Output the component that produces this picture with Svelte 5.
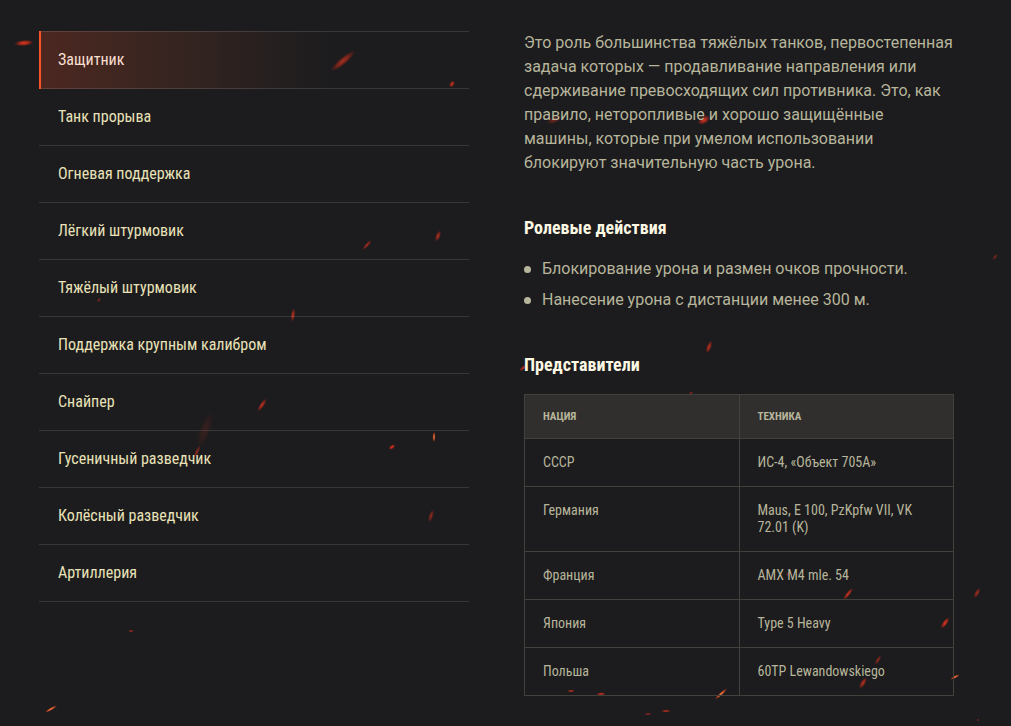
<script>
  let active = $state(0);

  const roles = [
    'Защитник',
    'Танк прорыва',
    'Огневая поддержка',
    'Лёгкий штурмовик',
    'Тяжёлый штурмовик',
    'Поддержка крупным калибром',
    'Снайпер',
    'Гусеничный разведчик',
    'Колёсный разведчик',
    'Артиллерия'
  ];

  const actions = [
    'Блокирование урона и размен очков прочности.',
    'Нанесение урона с дистанции менее 300 м.'
  ];

  const vehicles = [
    { nation: 'СССР', tanks: 'ИС-4, «Объект 705А»' },
    { nation: 'Германия', tanks: 'Maus, E 100, PzKpfw VII, VK 72.01 (K)' },
    { nation: 'Франция', tanks: 'AMX M4 mle. 54' },
    { nation: 'Япония', tanks: 'Type 5 Heavy' },
    { nation: 'Польша', tanks: '60TP Lewandowskiego' }
  ];

  // x, y, half length, half width, angle, opacity, hot core
  const sparks = [
    [24, 43, 10, 3.2, -5, 1, 0],
    [343, 61, 16, 4, -40, 0.7, 0],
    [452, 84, 4, 2.6, -60, 0.9, 0],
    [554, 120, 8, 3.5, -20, 0.45, 0],
    [704, 120, 7, 4, -30, 0.95, 0],
    [367, 245, 7, 2, -48, 0.7, 0],
    [438, 236, 6, 2.6, -70, 0.75, 0],
    [293, 315, 7, 2.4, -82, 0.8, 0],
    [99, 300, 3, 1.8, -50, 0.5, 0],
    [709, 347, 7, 2.6, -70, 0.8, 0],
    [523, 368, 5, 2, -40, 0.8, 0],
    [691, 393, 3, 1.5, -20, 0.5, 0],
    [995, 257, 4, 2, -55, 0.45, 0],
    [262, 405, 8, 2.4, -56, 0.85, 0],
    [205, 430, 20, 6, -70, 0.15, 0],
    [197, 452, 8, 2, -65, 0.6, 0],
    [392, 447, 4, 2.2, -35, 1, 0],
    [434, 437, 5, 1.5, -88, 0.8, 1],
    [431, 516, 7, 2.4, -72, 0.6, 0],
    [788, 574, 3, 2, -60, 0.5, 0],
    [848, 594, 8, 2.2, -52, 0.9, 0],
    [977, 593, 6, 2.4, -60, 0.7, 0],
    [945, 623, 7, 2.6, -55, 1, 0],
    [878, 660, 6, 2, -58, 0.6, 0],
    [863, 683, 7, 2.6, -58, 0.8, 0],
    [955, 677, 5, 1.4, -28, 0.85, 1],
    [721, 694, 8, 1.6, -42, 0.85, 1],
    [571, 691, 4, 1.6, -5, 0.8, 0],
    [601, 694, 5, 1.8, -5, 0.9, 0],
    [648, 714, 4, 1.5, -10, 0.6, 0],
    [666, 711, 5, 1.7, 0, 0.8, 0],
    [978, 720, 2, 1, 0, 0.6, 0],
    [131, 631, 3, 1.5, 0, 0.7, 0],
    [51, 709, 7, 1.4, -30, 0.85, 1]
  ];
</script>

<div class="page">
  <svg class="sparks" aria-hidden="true">
    <defs>
      <radialGradient id="ember">
        <stop offset="0" stop-color="#e43822" />
        <stop offset="0.5" stop-color="#b32a1b" stop-opacity="0.8" />
        <stop offset="1" stop-color="#801b14" stop-opacity="0" />
      </radialGradient>
      <radialGradient id="hot">
        <stop offset="0" stop-color="#f09450" />
        <stop offset="0.5" stop-color="#e35a2c" />
        <stop offset="1" stop-color="#a52a15" stop-opacity="0.2" />
      </radialGradient>
    </defs>
    {#each sparks as [x, y, rx, ry, angle, opacity, hot]}
      <ellipse
        {rx}
        {ry}
        {opacity}
        fill={hot ? 'url(#hot)' : 'url(#ember)'}
        transform="translate({x} {y}) rotate({angle})"
      />
    {/each}
  </svg>

  <ul class="roles">
    {#each roles as role, i}
      <li>
        <button class:active={active === i} onclick={() => (active = i)}>{role}</button>
      </li>
    {/each}
  </ul>

  <div class="details">
    <p>
      Это роль большинства тяжёлых танков, первостепенная задача которых — продавливание
      направления или сдерживание превосходящих сил противника. Это, как правило, неторопливые
      и хорошо защищённые машины, которые при умелом использовании блокируют значительную
      часть урона.
    </p>

    <h3>Ролевые действия</h3>
    <ul class="actions">
      {#each actions as action}
        <li>{action}</li>
      {/each}
    </ul>

    <h3>Представители</h3>
    <table>
      <thead>
        <tr>
          <th>Нация</th>
          <th>Техника</th>
        </tr>
      </thead>
      <tbody>
        {#each vehicles as v}
          <tr>
            <td>{v.nation}</td>
            <td>{v.tanks}</td>
          </tr>
        {/each}
      </tbody>
    </table>
  </div>
</div>

<style>
:global(body) {
  margin: 0;
  background: #1c1c1e;
}
.page {
  position: relative;
  isolation: isolate;
  box-sizing: border-box;
  min-height: 100vh;
  padding: 31px 57px 30px 39px;
  display: grid;
  grid-template-columns: 1fr 1fr;
  gap: 55px;
  align-items: start;
  color: #b7b59b;
  font-family: Roboto, 'Liberation Sans', sans-serif;
  font-size: 16px;
  line-height: 24px;
}
.sparks {
  position: absolute;
  inset: 0;
  width: 100%;
  height: 100%;
  z-index: -1;
  pointer-events: none;
}
ul {
  list-style: none;
  margin: 0;
  padding: 0;
}

.roles button {
  position: relative;
  display: block;
  width: 100%;
  padding: 16px 19px;
  border: 0 solid rgba(255, 255, 255, 0.12);
  border-bottom-width: 1px;
  background: none;
  color: #e9e2b8;
  font: 16px/24px 'Roboto Condensed', Roboto, sans-serif;
  text-align: left;
  cursor: pointer;
}
.roles li:first-child button {
  border-top-width: 1px;
}
.roles button:hover {
  color: #fff;
}
.roles button.active {
  color: #f9dfd0;
  background: linear-gradient(90deg, rgba(250, 80, 40, 0.22), rgba(250, 100, 50, 0.12) 30%, rgba(250, 100, 60, 0) 68%) border-box;
}
.roles button.active::before {
  content: '';
  position: absolute;
  left: 0;
  top: -1px;
  bottom: -1px;
  width: 2px;
  background: #fa5528;
}

p {
  margin: 0;
}
h3 {
  margin: 41px 0 17px;
  color: #fcf8e3;
  font: bold 18px/24px 'Roboto Condensed', Roboto, sans-serif;
}
.actions li {
  display: flex;
  align-items: center;
  gap: 11px;
}
.actions li + li {
  margin-top: 7px;
}
.actions li::before {
  content: '';
  flex: none;
  width: 7px;
  height: 7px;
  border-radius: 50%;
  background: #b7b59b;
}

table {
  width: 100%;
  table-layout: fixed;
  border-collapse: collapse;
  font: 14px/17px 'Roboto Condensed', Roboto, sans-serif;
}
th, td {
  border: 1px solid #42423c;
  padding: 15px 18px;
  text-align: left;
  vertical-align: top;
}
th {
  background: #302f2d;
  font-size: 11px;
  line-height: 13px;
  text-transform: uppercase;
}
</style>
